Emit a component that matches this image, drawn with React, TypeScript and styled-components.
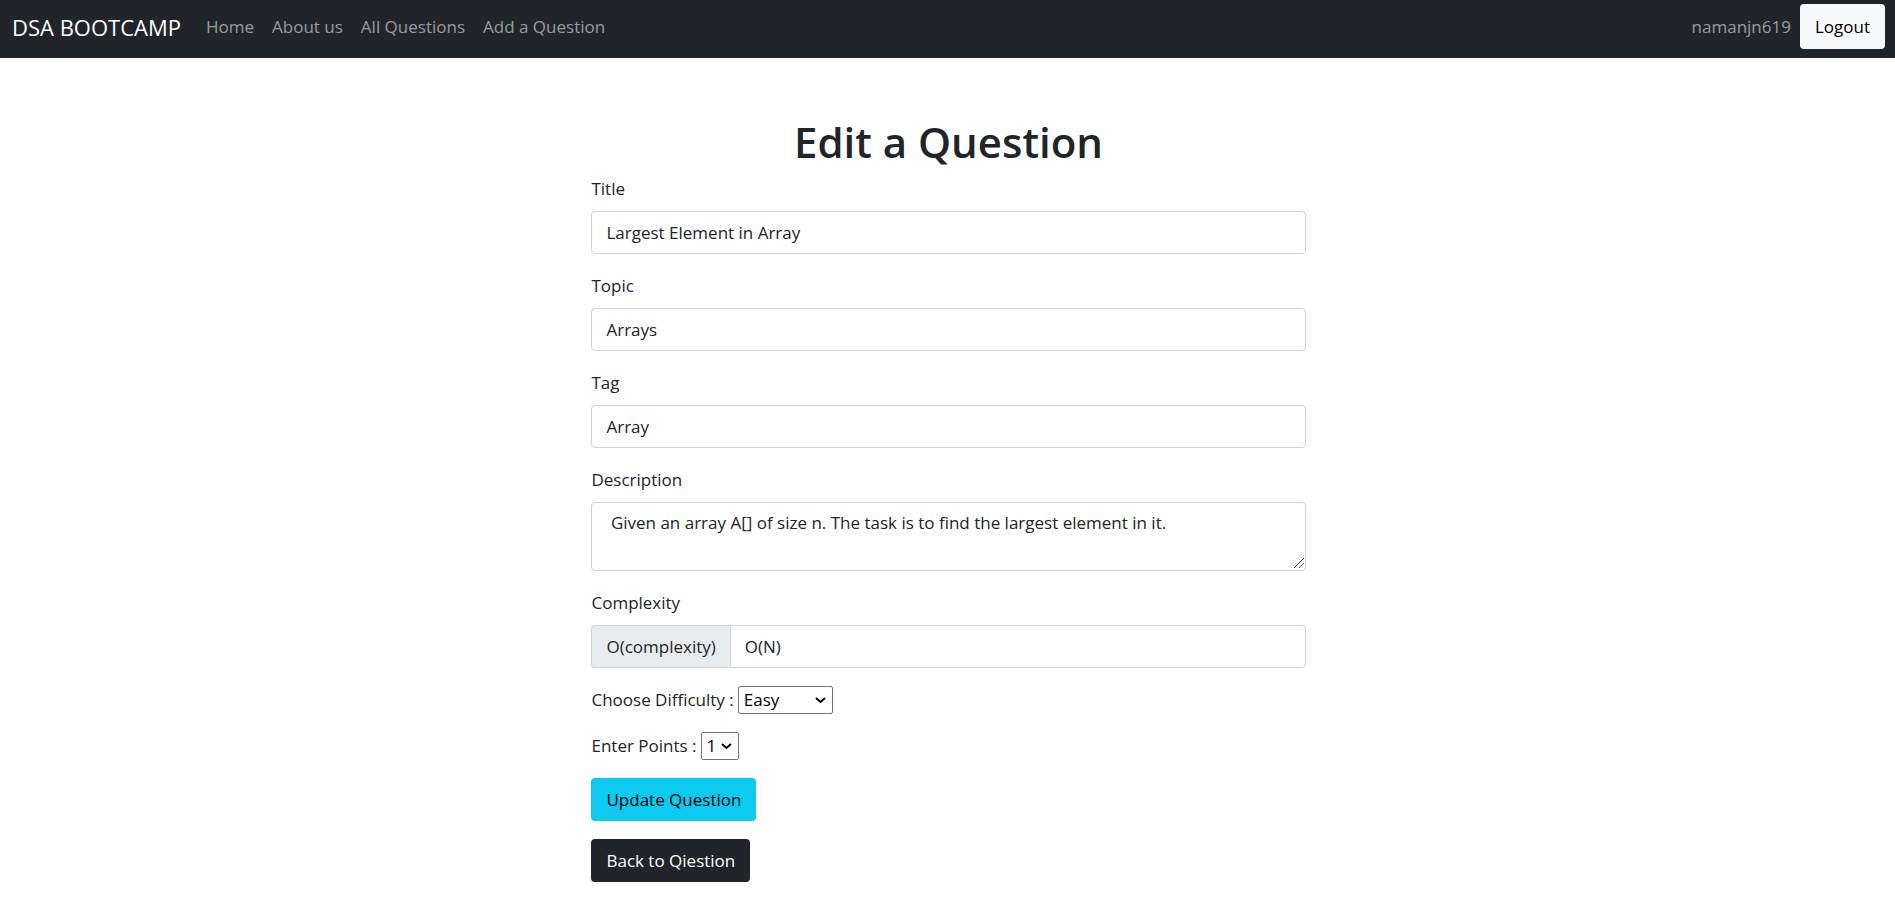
import React from "react";
import styled, { createGlobalStyle, css } from "styled-components";

const Global = createGlobalStyle`
  *, *::before, *::after { box-sizing: border-box; }
  body {
    margin: 0;
    background: #fff;
    color: #212529;
    font-family: "Segoe UI", "Open Sans", "Noto Sans", sans-serif;
    font-size: 17px;
    line-height: 26px;
  }
  input, textarea, select, button { font-family: inherit; font-size: inherit; line-height: inherit; }
`;

const Navbar = styled.nav`
  display: flex;
  align-items: center;
  min-height: 58px;
  padding: 0 10px 5px 12px;
  background: #212529;
`;

const Brand = styled.a`
  margin-right: 16px;
  color: #fff;
  font-size: 22px;
  line-height: 30px;
  text-decoration: none;
`;

const NavLink = styled.a`
  padding: 8px 9px;
  color: rgba(255, 255, 255, 0.55);
  text-decoration: none;
`;

const NavEnd = styled.div`
  display: flex;
  align-items: center;
  margin-left: auto;
`;

const tones = {
  light: css`background: #f8f9fa; color: #000; padding: 10px 15px 9px;`,
  info: css`background: #0dcaf0; color: #000;`,
  dark: css`background: #212529; color: #fff;`,
};

const Button = styled.button<{ $tone: keyof typeof tones }>`
  display: block;
  padding: 9px 15px 8px;
  border: 0;
  border-radius: 4px;
  cursor: pointer;
  ${(p) => tones[p.$tone]}
`;

const Main = styled.main`
  width: 38%;
  min-width: 320px;
  margin: 0 auto;
  padding: 56px 2px 15px 4px;
`;

const Heading = styled.h1`
  margin: 0 0 6px;
  font-size: 42px;
  font-weight: 600;
  line-height: 55px;
  text-align: center;
`;

const Form = styled.form`
  display: flex;
  flex-direction: column;
  align-items: flex-start;
  gap: 18px;
`;

const Field = styled.div`
  width: 100%;
`;

const Label = styled.label`
  display: block;
  margin-bottom: 8px;
  line-height: 28px;
`;

const control = css`
  display: block;
  width: 100%;
  padding: 8px 14px 7px;
  border: 1px solid #ced4da;
  border-radius: 4px;
  background: #fff;
  color: #212529;
`;

const Input = styled.input`${control}`;

const TextAreaBox = styled.div`
  position: relative;
`;

const TextArea = styled.textarea`
  ${control}
  height: 69px;
  padding-top: 7px;
  resize: vertical;
  &::-webkit-resizer { background: transparent; }
`;

const Grip = styled.svg`
  position: absolute;
  right: 2px;
  bottom: 3px;
  pointer-events: none;
`;

const InputGroup = styled.div`
  display: flex;
  ${Input} { flex: 1; min-width: 0; border-radius: 0 4px 4px 0; }
`;

const Addon = styled.span`
  padding: 8px 14px 7px;
  border: 1px solid #ced4da;
  border-right: 0;
  border-radius: 4px 0 0 4px;
  background: #e9ecef;
`;

const Choice = styled.div`
  display: flex;
  align-items: center;
  gap: 4px;
`;

const SelectBox = styled.div`
  position: relative;
`;

const Select = styled.select<{ $width: number }>`
  display: block;
  width: ${(p) => p.$width}px;
  height: 28px;
  padding: 0 0 0 5px;
  border: 1px solid #767676;
  border-radius: 2px;
  background: #fff;
  color: #000;
  appearance: none;
`;

const Chevron = styled.svg`
  position: absolute;
  top: 11px;
  right: 7px;
  pointer-events: none;
`;

type ChoiceFieldProps = { id: string; label: string; width: number; options: string[] };

function ChoiceField({ id, label, width, options }: ChoiceFieldProps) {
  return (
    <Choice>
      <label htmlFor={id}>{label}</label>
      <SelectBox>
        <Select id={id} $width={width} defaultValue={options[0]}>
          {options.map((option) => (
            <option key={option}>{option}</option>
          ))}
        </Select>
        <Chevron width="11" height="7" viewBox="0 0 11 7" aria-hidden="true">
          <path d="M1 1 L5.5 5 L10 1" fill="none" stroke="#000" strokeWidth="2" />
        </Chevron>
      </SelectBox>
    </Choice>
  );
}

export default function App() {
  return (
    <>
      <Global />
      <Navbar>
        <Brand href="#">DSA BOOTCAMP</Brand>
        <NavLink href="#">Home</NavLink>
        <NavLink href="#">About us</NavLink>
        <NavLink href="#">All Questions</NavLink>
        <NavLink href="#">Add a Question</NavLink>
        <NavEnd>
          <NavLink href="#">namanjn619</NavLink>
          <Button $tone="light" type="button">Logout</Button>
        </NavEnd>
      </Navbar>
      <Main>
        <Heading>Edit a Question</Heading>
        <Form>
          <Field>
            <Label htmlFor="title">Title</Label>
            <Input id="title" defaultValue="Largest Element in Array" />
          </Field>
          <Field>
            <Label htmlFor="topic">Topic</Label>
            <Input id="topic" defaultValue="Arrays" />
          </Field>
          <Field>
            <Label htmlFor="tag">Tag</Label>
            <Input id="tag" defaultValue="Array" />
          </Field>
          <Field>
            <Label htmlFor="description">Description</Label>
            <TextAreaBox>
              <TextArea
                id="description"
                defaultValue=" Given an array A[] of size n. The task is to find the largest element in it."
              />
              <Grip width="10" height="10" viewBox="0 0 10 10" aria-hidden="true">
                <path d="M0 10 L10 0 M5 10 L10 5" fill="none" stroke="#555" />
              </Grip>
            </TextAreaBox>
          </Field>
          <Field>
            <Label htmlFor="complexity">Complexity</Label>
            <InputGroup>
              <Addon>O(complexity)</Addon>
              <Input id="complexity" defaultValue="O(N)" />
            </InputGroup>
          </Field>
          <ChoiceField id="difficulty" label="Choose Difficulty :" width={95} options={["Easy", "Medium", "Hard"]} />
          <ChoiceField id="points" label="Enter Points :" width={38} options={["1", "2", "3"]} />
          <Button $tone="info" type="submit">Update Question</Button>
          <Button $tone="dark" type="button">Back to Qiestion</Button>
        </Form>
      </Main>
    </>
  );
}
